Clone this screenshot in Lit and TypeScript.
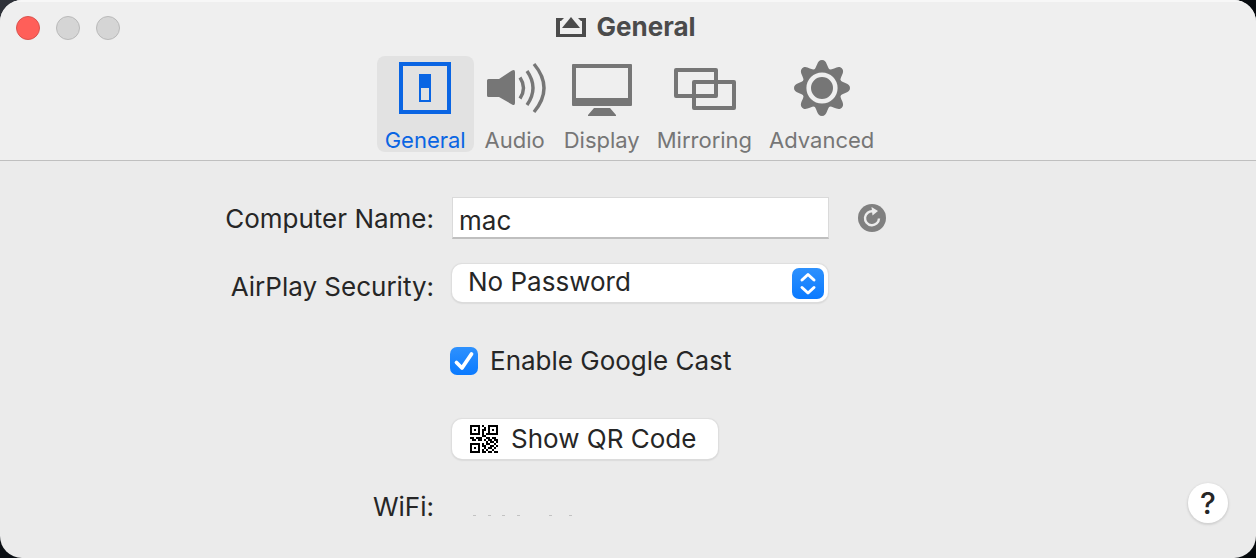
import { LitElement, html, css, svg } from "lit";
import { customElement, state } from "lit/decorators.js";

const ICONS = {
  general: svg`<svg width="64" height="60" viewBox="0 0 64 60" aria-hidden="true">
    <rect x="8" y="6" width="48" height="48" fill="none" stroke="currentColor" stroke-width="4"/>
    <rect x="27" y="17" width="10" height="26" fill="none" stroke="currentColor" stroke-width="2"/>
    <path d="M26 16h12v14H26z" fill="currentColor"/></svg>`,
  audio: svg`<svg width="64" height="60" viewBox="0 0 64 60" aria-hidden="true">
    <path d="M4 22.500q0-1.500 1.500-1.500H16L29 12.500q3-1.500 3 1.500V45q0 3-3 1.500L16 39H5.500Q4 39 4 37.500z" fill="currentColor"/>
    <g fill="none" stroke="currentColor" stroke-width="3.400"><path d="M37 19.500q7 10.500 0 21"/><path d="M44 13q12 17 0 34"/><path d="M51 6q20 24 0 48"/></g></svg>`,
  display: svg`<svg width="64" height="60" viewBox="0 0 64 60" aria-hidden="true">
    <path fill="currentColor" fill-rule="evenodd" d="M3 6h58q1 0 1 1v40q0 1-1 1H3q-1 0-1-1V7q0-1 1-1zM6 10v30h52V10zM24 50h16l6 7v1H18v-1z"/></svg>`,
  mirroring: svg`<svg width="64" height="60" viewBox="0 0 64 60" aria-hidden="true">
    <g fill="none" stroke="currentColor" stroke-width="4" stroke-linejoin="round"><path d="M4 12h40v26H4z"/><path d="M22 24h40v26H22z"/></g></svg>`,
  advanced: svg`<svg width="64" height="60" viewBox="0 0 64 60" aria-hidden="true">
    <g fill="currentColor" transform="translate(32 30)"><circle r="20"/>
    ${[0, 45, 90, 135, 180, 225, 270, 315].map(
      (a) => svg`<path transform="rotate(${a})" d="M-8.500-17.500C-4.500-20.500-5.500-28 0-28S4.500-20.500 8.500-17.500z"/>`
    )}</g>
    <circle cx="32" cy="30" r="13.300" fill="none" stroke="#efefef" stroke-width="4.600"/></svg>`,
};

const TABS = [
  { id: "general", label: "General", icon: ICONS.general },
  { id: "audio", label: "Audio", icon: ICONS.audio },
  { id: "display", label: "Display", icon: ICONS.display },
  { id: "mirroring", label: "Mirroring", icon: ICONS.mirroring },
  { id: "advanced", label: "Advanced", icon: ICONS.advanced },
];

const QR_ROWS = [
  "11111010011111",
  "10001001010001",
  "10101011010101",
  "10001010010001",
  "11111010111111",
  "00000011000000",
  "11011100110110",
  "01101101011011",
  "00000000101101",
  "11111010110010",
  "10001011001101",
  "10101001011010",
  "10001010100100",
  "11111011011011",
];

const QR_PATH = QR_ROWS.map((row, y) =>
  [...row].map((c, x) => (c === "1" ? `M${x} ${y}h1v1h-1z` : "")).join("")
).join("");

@customElement("app-root")
export class AppRoot extends LitElement {
  @state() private tab = "general";

  static styles = css`
    :host {
      display: block;
      background: linear-gradient(135deg, #30333a 0, #0c1015 20%, #05090c 100%);
      font-family: Inter, "Liberation Sans", sans-serif;
      color: #262626;
    }
    * { box-sizing: border-box; }
    button, input, select { font: inherit; color: inherit; margin: 0; }
    button { border: 0; background: none; padding: 0; }
    svg { display: block; flex: none; }
    .window {
      display: flex;
      flex-direction: column;
      min-height: 100vh;
      background: #ebebeb;
      border-radius: 22px;
      overflow: hidden;
    }
    .header {
      background: #efefef;
      border-bottom: 1px solid #bfbfbf;
      box-shadow: inset 0 2px #f7f7f7;
      padding-bottom: 8px;
    }
    .titlebar {
      display: grid;
      grid-template-columns: 1fr auto 1fr;
      align-items: center;
      height: 56px;
      padding: 0 20px 0 16px;
    }
    .lights { display: flex; gap: 16px; }
    .light {
      width: 24px;
      height: 24px;
      border-radius: 50%;
      background: #d5d5d5;
      border: 1px solid #b9b9b9;
    }
    .close { background: #ff5f59; border-color: #d9534e; }
    .title {
      display: flex;
      align-items: center;
      gap: 10px;
      margin: 0;
      padding-bottom: 2px;
      font-size: 26px;
      line-height: 32px;
      font-weight: 700;
      color: #4b4b4b;
    }
    .tabs { display: flex; justify-content: center; gap: 1px; padding-left: 3px; }
    .tab {
      display: flex;
      flex-direction: column;
      align-items: center;
      height: 96px;
      padding: 2px 8px 0;
      border-radius: 8px;
      font-size: 22px;
      line-height: 28px;
      color: #767676;
    }
    .tab svg { margin-bottom: 8px; }
    .selected { background: #e2e2e2; color: #0a65e3; }
    .form {
      flex: 1;
      display: flex;
      flex-direction: column;
      padding: 36px 0 28px;
      font-size: 26px;
      line-height: 32px;
    }
    .row {
      display: grid;
      grid-template-columns: minmax(0, 434fr) minmax(0, 804fr);
      column-gap: 18px;
      align-items: center;
      min-height: 40px;
    }
    .row + .row { margin-top: 24px; }
    .row + .spaced { margin-top: 38px; }
    .label { text-align: right; padding-top: 2px; }
    .low { padding-top: 8px; }
    .value { grid-column: 2; display: flex; align-items: center; }
    .text {
      width: 377px;
      height: 42px;
      padding: 5px 6px 0;
      border: 1px solid #dadada;
      border-bottom: 2px solid #bfbfbf;
      border-radius: 0;
      background: #fff;
      outline: none;
    }
    .refresh { margin-left: 29px; }
    .picker { display: grid; align-items: center; width: 376px; }
    .picker > * { grid-area: 1 / 1; }
    .picker svg { justify-self: end; margin-right: 4px; pointer-events: none; }
    .select {
      appearance: none;
      width: 100%;
      height: 38px;
      padding: 0 44px 2px 16px;
      border: 0;
      border-radius: 10px;
      background: #fff;
      box-shadow: 0 0 1px 1px #dedede, 0 1px 2px #b8b8b8;
      outline: none;
    }
    .check { display: grid; width: 28px; height: 28px; margin: 0 12px 0 -2px; }
    .check > * { grid-area: 1 / 1; }
    .check svg { pointer-events: none; visibility: hidden; }
    .box {
      appearance: none;
      width: 28px;
      height: 28px;
      border-radius: 7px;
      background: #fff;
      box-shadow: 0 0 1px 1px #d0d0d0;
    }
    .box:checked {
      background: linear-gradient(#2e91fd, #0a7aff);
      box-shadow: none;
    }
    .box:checked + svg { visibility: visible; }
    .qr {
      display: flex;
      align-items: center;
      gap: 13px;
      height: 40px;
      padding: 0 22px 0 18px;
      border-radius: 10px;
      background: #fff;
      box-shadow: 0 0 1px 1px #dedede, 0 1px 2px #b8b8b8;
    }
    .footer { display: flex; justify-content: space-between; align-items: center; }
    .help {
      width: 40px;
      height: 40px;
      margin-right: 28px;
      border-radius: 50%;
      background: #fff;
      box-shadow: 0 1px 2px 1px #d2d2d2;
      font-size: 30px;
      font-weight: 500;
      line-height: 40px;
      text-align: center;
    }
  `;

  render() {
    return html`
      <div class="window">
        <header class="header">
          <div class="titlebar">
            <div class="lights">
              <button class="light close" aria-label="Close"></button>
              <button class="light" aria-label="Minimize"></button>
              <button class="light" aria-label="Zoom"></button>
            </div>
            <h1 class="title">
              <svg width="30" height="20" viewBox="0 0 30 20" aria-hidden="true">
                <path d="M0 1h8L5 4H4v13h22V4h-1l-3-3h8v19H0z" fill="currentColor"/>
                <path d="M15 0l9 11H6z" fill="currentColor"/>
              </svg>
              General
            </h1>
          </div>
          <nav class="tabs">
            ${TABS.map(
              (t) => html`<button
                class="tab ${t.id === this.tab ? "selected" : ""}"
                @click=${() => (this.tab = t.id)}
              >${t.icon}${t.label}</button>`
            )}
          </nav>
        </header>
        <main class="form">
          <div class="row">
            <label class="label" for="name">Computer Name:</label>
            <div class="value">
              <input class="text" id="name" type="text" value="mac" />
              <button class="refresh" aria-label="Reset name">
                <svg width="28" height="28" viewBox="0 0 28 28" aria-hidden="true">
                  <circle cx="14" cy="14" r="14" fill="#808080"/>
                  <path d="M15 7.300A7 7 0 1 0 21 14.500" fill="none" stroke="#ececec" stroke-width="2.400"/>
                  <path d="M13.500 3l6.500 4-5.500 4.500z" fill="#ececec"/>
                </svg>
              </button>
            </div>
          </div>
          <div class="row">
            <label class="label low" for="security">AirPlay Security:</label>
            <div class="value">
              <div class="picker">
                <select class="select" id="security">
                  <option>No Password</option>
                </select>
                <svg width="32" height="31" viewBox="0 0 32 31" aria-hidden="true">
                  <defs><linearGradient id="blue" x2="0" y2="1">
                    <stop stop-color="#2e91fd"/><stop offset="1" stop-color="#0a7aff"/>
                  </linearGradient></defs>
                  <rect width="32" height="31" rx="7" fill="url(#blue)"/>
                  <path d="M10 12L16 6.500l6 5.500M10 19.500L16 25l6-5.500" fill="none" stroke="#fff"
                    stroke-width="3" stroke-linecap="round" stroke-linejoin="round"/>
                </svg>
              </div>
            </div>
          </div>
          <div class="row spaced">
            <div class="value">
              <span class="check">
                <input class="box" id="cast" type="checkbox" checked />
                <svg width="28" height="28" viewBox="0 0 28 28" aria-hidden="true">
                  <path d="M6.500 15.500l5.500 5.500L21.500 7" fill="none" stroke="#fff" stroke-width="3.800"
                    stroke-linecap="round" stroke-linejoin="round"/>
                </svg>
              </span>
              <label for="cast">Enable Google Cast</label>
            </div>
          </div>
          <div class="row spaced">
            <div class="value">
              <button class="qr">
                <svg width="28" height="28" viewBox="0 0 14 14" shape-rendering="crispEdges" aria-hidden="true">
                  <path d=${QR_PATH} fill="#000"/>
                </svg>
                Show QR Code
              </button>
            </div>
          </div>
          <div class="row">
            <span class="label low">WiFi:</span>
            <div class="footer">
              <svg width="130" height="40" viewBox="0 0 130 40" aria-hidden="true">
                <path d="M21 32.500h3M36 32.500h3M50 32.500h3M65 32.500h3M97 32.500h3M117 32.500h3" stroke="#c2c2c2"/>
              </svg>
              <button class="help" aria-label="Help">?</button>
            </div>
          </div>
        </main>
      </div>
    `;
  }
}
